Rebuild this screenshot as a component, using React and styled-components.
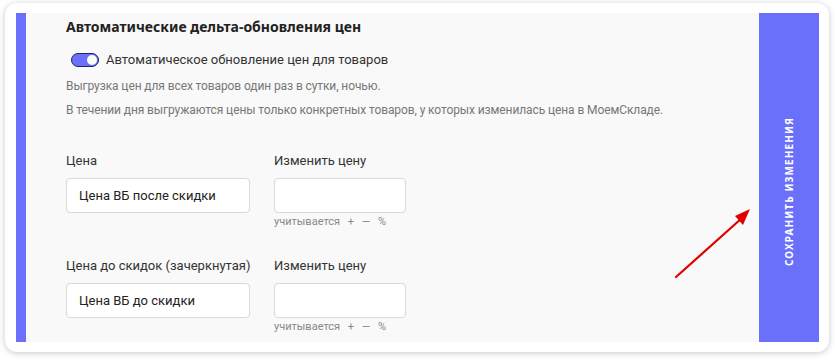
import React from "react";
import styled, { createGlobalStyle } from "styled-components";

const ACCENT = "#6b70fa";
const BODY = `Roboto, "Noto Sans", sans-serif`;

const Global = createGlobalStyle`
  html, body { margin: 0; padding: 0; background: #ffffff; }
  body { font-family: ${BODY}; }
  * { box-sizing: border-box; }
`;

const Page = styled.div`
  position: relative;
  width: 835px;
  height: 361px;
  padding: 3px 6px 9px 5px;
`;

const Card = styled.div`
  display: flex;
  height: 349px;
  background: #ffffff;
  border-radius: 12px;
  box-shadow: 0 1px 6px rgba(0, 0, 0, 0.22);
  padding: 10px 10px 10px 11px;
`;

const Panel = styled.div`
  flex: 1;
  overflow: hidden;
  background: #f9f9f9;
  border-left: 10px solid ${ACCENT};
  padding: 4px 0 0 40px;
  display: flex;
  flex-direction: column;
`;

const Title = styled.h2`
  margin: 0;
  font-family: "Noto Sans", sans-serif;
  font-size: 14px;
  font-weight: 700;
  color: #222;
  line-height: 20px;
`;

const ToggleRow = styled.label`
  display: flex;
  align-items: center;
  gap: 7px;
  margin: 14px 0 0 5px;
  font-size: 13px;
  color: #333;
  line-height: 18px;
`;

const Switch = styled.span`
  position: relative;
  width: 28px;
  height: 14px;
  border-radius: 7px;
  background: ${ACCENT};
  border: 1.5px solid #23235e;
  flex: none;
  &::after {
    content: "";
    position: absolute;
    right: 1px;
    top: 0.5px;
    width: 10px;
    height: 10px;
    border-radius: 50%;
    background: #fff;
  }
`;

const Note = styled.p`
  margin: ${(p) => p.$mt}px 0 0;
  font-size: 12px;
  color: #777;
  line-height: 17px;
  letter-spacing: -0.1px;
`;

const Group = styled.div`
  display: grid;
  grid-template-columns: 184px 132px;
  column-gap: 24px;
  margin-top: ${(p) => p.$mt}px;
`;

const Label = styled.div`
  font-size: 13px;
  color: #333;
  line-height: 18px;
  margin-bottom: 8px;
  white-space: nowrap;
`;

const Field = styled.div`
  display: flex;
  flex-direction: column;
`;

const Input = styled.div`
  height: 35px;
  border: 1px solid #d9d9d9;
  border-radius: 4px;
  background: #fff;
  font-size: 13px;
  color: #222;
  padding: 0 12px;
  display: flex;
  align-items: center;
`;

const Hint = styled.div`
  font-size: 11px;
  color: #888;
  line-height: 14px;
  margin-top: 2px;
  word-spacing: 5px;
`;

const SaveButton = styled.button`
  width: 60px;
  flex: none;
  border: none;
  background: ${ACCENT};
  color: #fff;
  display: flex;
  align-items: center;
  justify-content: center;
  padding: 29px 0 0;
  cursor: pointer;
  font-family: "Noto Sans", sans-serif;
`;

const Vertical = styled.span`
  writing-mode: vertical-rl;
  transform: rotate(180deg);
  font-size: 10px;
  font-weight: 700;
  letter-spacing: 1.1px;
  text-transform: uppercase;
`;

const Arrow = styled.svg`
  position: absolute;
  left: 670px;
  top: 203px;
  pointer-events: none;
`;

function PriceGroup({ label, value, mt }) {
  return (
    <Group $mt={mt}>
      <Field>
        <Label>{label}</Label>
        <Input>{value}</Input>
      </Field>
      <Field>
        <Label>Изменить цену</Label>
        <Input />
        <Hint>учитывается + — %</Hint>
      </Field>
    </Group>
  );
}

export default function App() {
  return (
    <>
      <Global />
      <Page>
        <Card>
          <Panel>
            <Title>Автоматические дельта-обновления цен</Title>
            <ToggleRow>
              <Switch />
              Автоматическое обновление цен для товаров
            </ToggleRow>
            <Note $mt={9}>Выгрузка цен для всех товаров один раз в сутки, ночью.</Note>
            <Note $mt={7}>
              В течении дня выгружаются цены только конкретных товаров, у которых изменилась цена в МоемСкладе.
            </Note>
            <PriceGroup label="Цена" value="Цена ВБ после скидки" mt={33} />
            <PriceGroup label="Цена до скидок (зачеркнутая)" value="Цена ВБ до скидки" mt={28} />
          </Panel>
          <SaveButton>
            <Vertical>Сохранить изменения</Vertical>
          </SaveButton>
        </Card>
        <Arrow width="90" height="80" viewBox="0 0 90 80">
          <line x1="6" y1="74" x2="72" y2="15" stroke="#e00000" strokeWidth="2.2" strokeLinecap="round" />
          <polygon points="80,6 65,13 73,22" fill="#e00000" />
        </Arrow>
      </Page>
    </>
  );
}
